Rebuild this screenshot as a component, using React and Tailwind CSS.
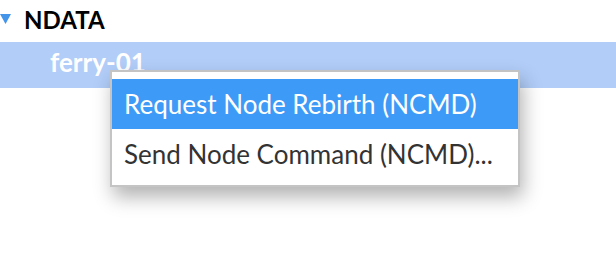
export default function App() {
  return (
    <div className="relative w-[616px] h-[264px] bg-white overflow-hidden" style={{ fontFamily: 'Lato, "Noto Sans", sans-serif' }}>
      <div className="flex items-center h-[42px]">
        <svg width="11" height="10" viewBox="0 0 11 10" className="mt-[-4px]">
          <polygon points="0,0 11,0 5.5,10" fill="#4494ea" />
        </svg>
        <span className="ml-[13px] text-[24px] font-bold text-black leading-none mt-[-2px]">NDATA</span>
      </div>
      <div className="flex items-center h-[46px] bg-[#b1cdf8]">
        <span className="ml-[50px] text-[26px] font-bold text-white leading-none mt-[-6px]">ferry-01</span>
      </div>

      <div className="absolute left-[110px] top-[70px] w-[410px] border-2 border-[#c4c4c4] bg-white pt-[7px] pb-[6px] shadow-[3px_10px_18px_rgba(0,0,0,0.3)]">
        <div className="h-[50px] flex items-center bg-[#3d9af7] pl-[12px] text-white text-[26px] leading-none">
          Request Node Rebirth (NCMD)
        </div>
        <div className="h-[50px] flex items-center pl-[12px] text-[#333] text-[26px] leading-none">
          Send Node Command (NCMD)...
        </div>
      </div>
    </div>
  );
}
